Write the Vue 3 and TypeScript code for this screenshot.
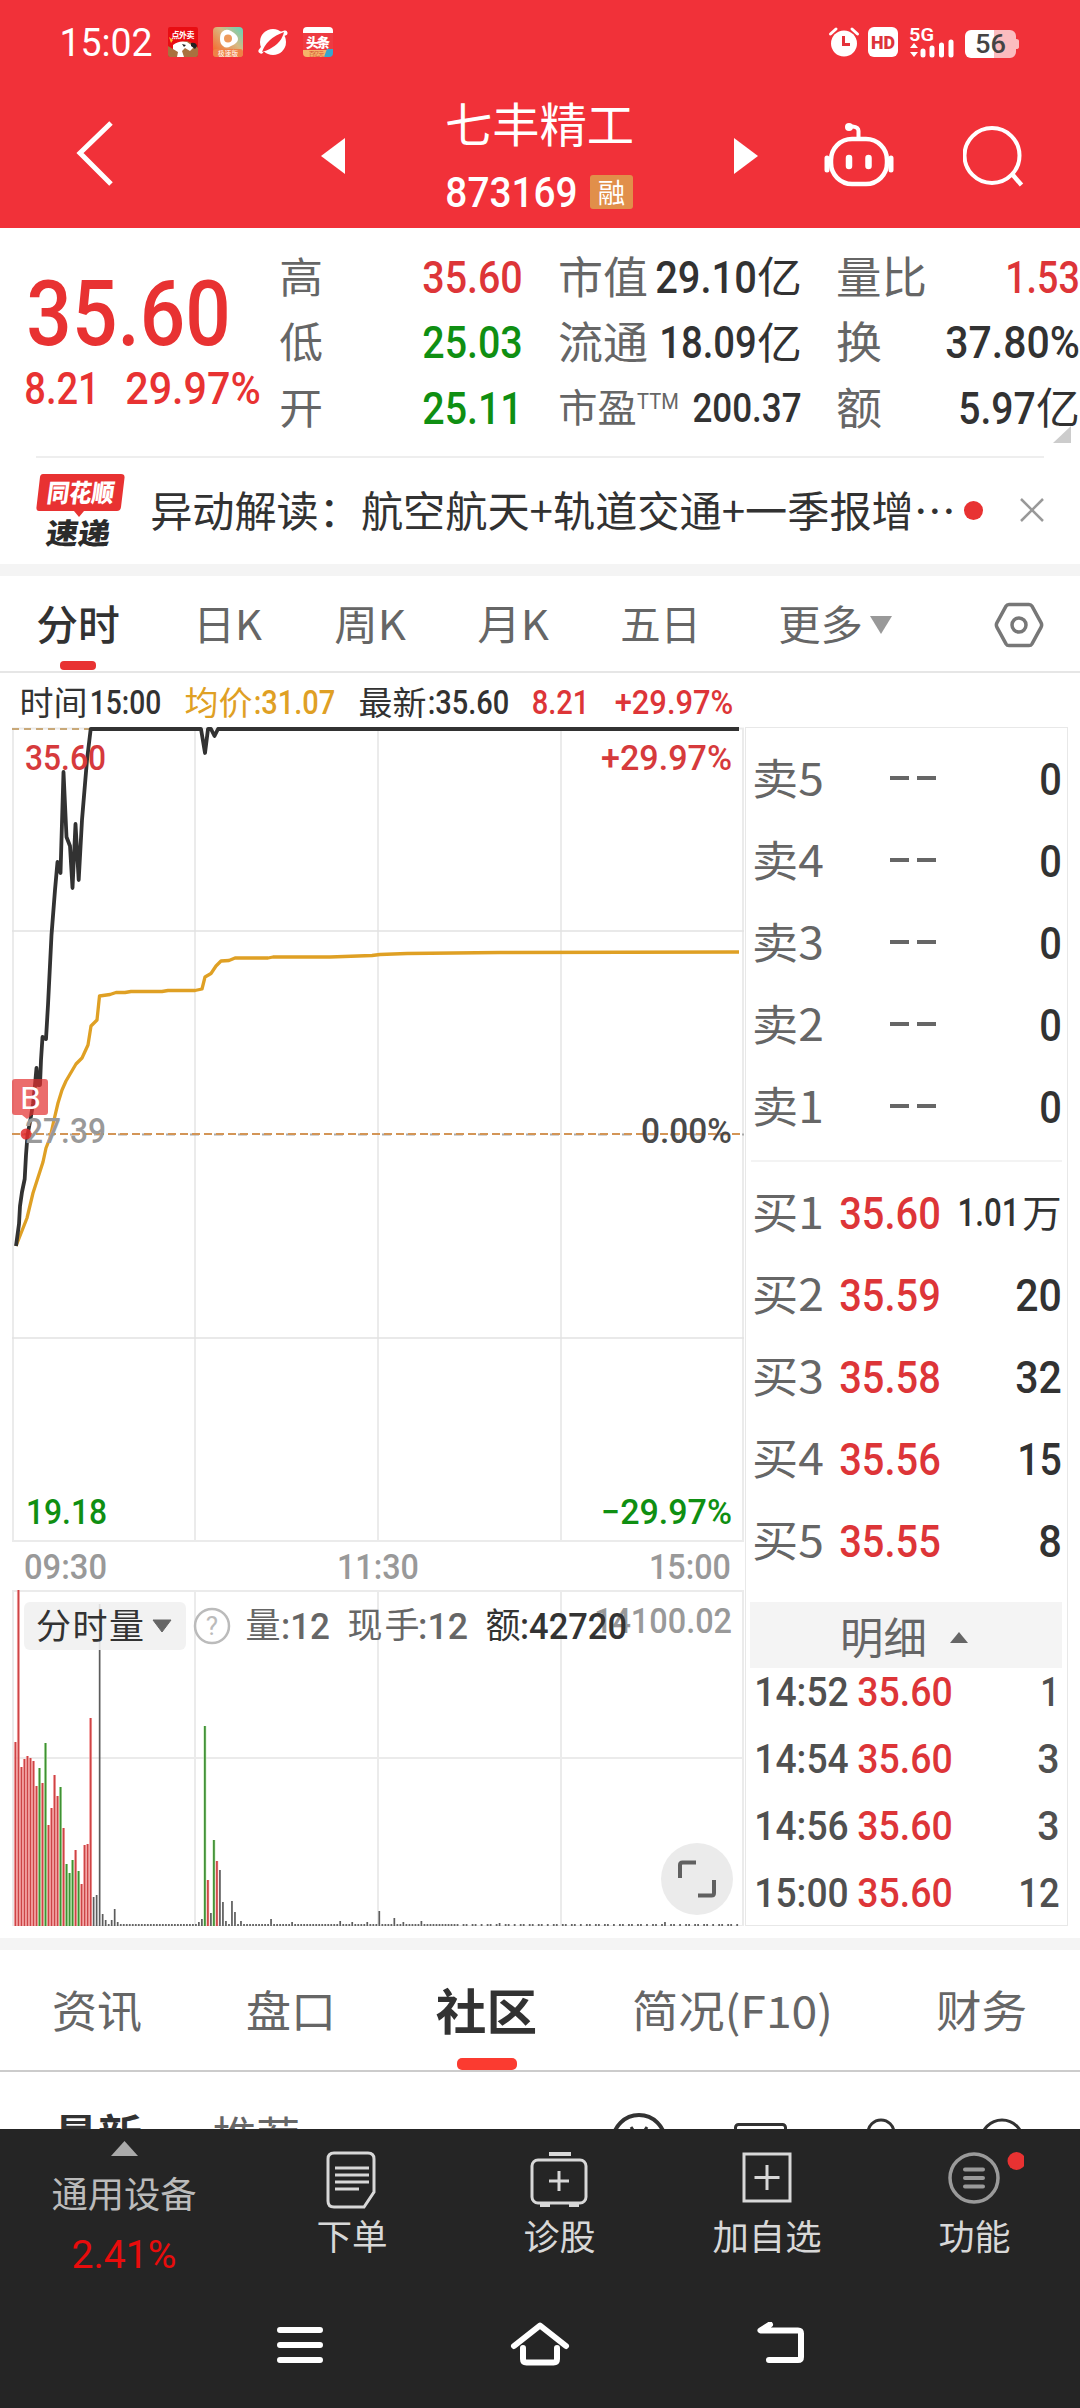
<script setup lang="ts">
import { h } from 'vue'

interface FitProps { s: string; w: number; f: number; cjk?: boolean; b?: number }

// A line of text fitted to a given width; its caps are centred in a box one em high.
const Fit = (p: FitProps) => {
  const pad = p.f * (p.cjk ? 0.045 : 0.04)
  return h('svg', { width: p.w, height: p.f, class: 'fit' }, [
    h('text', {
      x: -pad,
      y: p.f / 2 + p.f * (p.cjk ? 0.38 : 0.356),
      textLength: p.w + pad * 2,
      lengthAdjust: 'spacingAndGlyphs',
      'font-size': p.f,
      'font-weight': p.b ?? (p.cjk ? 400 : 500),
      'font-family': p.cjk ? "'Noto Sans CJK SC', sans-serif" : "Roboto, 'Noto Sans CJK SC', sans-serif",
      fill: 'currentColor',
    }, p.s),
  ])
}
Fit.props = { s: String, w: Number, f: Number, cjk: Boolean, b: Number }

const sells = ['卖5', '卖4', '卖3', '卖2', '卖1']
const buys = [
  { n: '买1', p: '35.60', v: '1.01', w: 59, unit: true },
  { n: '买2', p: '35.59', v: '20', w: 43 },
  { n: '买3', p: '35.58', v: '32', w: 43 },
  { n: '买4', p: '35.56', v: '15', w: 41 },
  { n: '买5', p: '35.55', v: '8', w: 20 },
]
const deals = [
  { t: '14:52', v: '1', w: 16 },
  { t: '14:54', v: '3', w: 19 },
  { t: '14:56', v: '3', w: 19 },
  { t: '15:00', v: '12', w: 38 },
]

const price = '16,1246 19,1224 20,1206 22,1192 24.7,1179 26,1155 27.5,1135 30,1122 33,1104 35,1085 36.5,1068 38,1085 40,1085 41,1060 42.5,1037 46,1039 48,1005 50,965 51.5,935 55,890 57.5,862 60.5,873 63.5,772 66.5,837 70,846 72.5,888 75.5,824 78.7,880 82,820 87,760 90.7,729 201,729 205,753 208,729 211,729 214.5,736 218,729 739,729'
const average = '16,1246 27,1218 33,1193 43,1162 46,1148 50,1138 54,1120 58,1103 62,1090 66,1081 76,1064 82,1058 88,1045 91,1026 97,1020 99.5,996 110,994.5 116,992.5 125,992.5 131,991.5 162,991.5 168,990.5 195,990.5 202,989 205,977 211,973.5 216,966 221,961 229,960.5 235,958 268,958 273,957 330,957 372,955.5 380,954.5 407,953.5 500,952.5 739,952'

// Volume per minute: slot number, height, direction (r up, g down, k flat).
const peaks: [number, number, string][] = [
  [0, 184, 'r'], [1, 336, 'r'], [2, 159, 'r'], [3, 167, 'r'], [4, 170, 'r'], [5, 168, 'r'], [6, 165, 'r'],
  [7, 140, 'r'], [8, 158, 'g'], [9, 143, 'r'], [10, 183, 'g'], [11, 101, 'r'], [12, 118, 'r'], [13, 151, 'r'],
  [14, 130, 'r'], [15, 139, 'g'], [16, 98, 'r'], [17, 62, 'g'], [18, 53, 'g'], [19, 66, 'g'], [20, 76, 'r'],
  [21, 55, 'g'], [22, 42, 'r'], [23, 81, 'r'], [24, 82, 'r'], [25, 208, 'r'], [26, 29, 'k'], [27, 31, 'k'],
  [28, 322, 'k'], [29, 12, 'k'], [30, 6, 'k'], [32, 6, 'k'], [33, 17, 'k'], [34, 4, 'k'], [61, 4, 'k'],
  [62, 7, 'k'], [63, 200, 'g'], [64, 46, 'r'], [65, 13, 'k'], [66, 86, 'g'], [67, 65, 'r'], [68, 56, 'k'],
  [69, 24, 'k'], [70, 5, 'k'], [72, 25, 'k'], [73, 14, 'k'], [75, 5, 'k'], [85, 7, 'k'], [92, 4, 'k'],
  [108, 5, 'k'], [112, 4, 'k'], [117, 4, 'k'], [121, 15, 'k'], [126, 8, 'k'], [129, 4, 'k'], [135, 5, 'k'],
  [161, 3, 'k'], [216, 4, 'k'],
]
const taken = new Set(peaks.map((b) => b[0]))
const quiet = Array.from({ length: 241 }, (_, i) => i)
  .filter((i) => i > 28 && !taken.has(i) && !(i > 145 && (i * 7) % 11 < 4))
const tint: Record<string, string> = { r: '#cc4446', g: '#3f8f35', k: '#5c5c5c' }
const halo: Record<string, string> = { r: '#ffb0b0', g: '#b5e8a4', k: 'none' }
const barX = (i: number) => 15.4 + i * 3.007
</script>

<template>
  <div class="page">
    <header class="head">
      <div class="status">
        <Fit s="15:02" :w="90" :f="39" :b="400" class="clock" />
        <svg class="app" width="30" height="30" viewBox="0 0 30 30">
          <rect width="30" height="30" rx="2" fill="#e90d12" />
          <path d="M0 19l5 3 4-6 10-2 7 3 4 4v7a2 2 0 0 1-2 2H2a2 2 0 0 1-2-2z" fill="#a9713f" />
          <path d="M5 18q6-5 14-3l7 5-4 4-5-3-3 3 2 6H9l1-5-5-3z" fill="#fff" />
          <path d="M23 16q5-1 6 3l-2 3-4-3zM14 17l4 1-2 2z" fill="#222" /><path d="M1 10l4 3-2 3z" fill="#ffbd2e" />
          <text x="3.5" y="10.5" font-size="8" font-weight="700" fill="#fff" textLength="23">点外卖</text>
        </svg>
        <svg class="app" width="30" height="30" viewBox="0 0 30 30">
          <defs><linearGradient id="video" x1="1" y1="0" x2="0.1" y2="0.9"><stop offset="0" stop-color="#5bd6bd" /><stop offset=".45" stop-color="#d8b982" /><stop offset="1" stop-color="#f6692c" /></linearGradient></defs>
          <rect width="30" height="30" rx="4" fill="url(#video)" />
          <path d="M9 5q4-4 9-1 7 4 7 8 0 4-7 7-5 3-8 0-3-2-3-7 0-5 2-7z" fill="#fff" /><circle cx="15" cy="11.500" r="4" fill="#ee9a5c" />
          <rect y="22" width="30" height="8" rx="3" fill="#ef8246" /><text x="5" y="28.500" font-size="6.500" fill="#fff" textLength="20">极速版</text>
        </svg>
        <svg class="app" width="30" height="30" viewBox="0 0 30 30">
          <circle cx="15" cy="15" r="13" fill="#fff" />
          <path d="M3 24Q13 9 27 6" fill="none" stroke="#fff" stroke-width="5" stroke-linecap="round" />
          <path d="M4 25Q9 11 26 5q-3 14-22 20z" fill="#f13139" />
        </svg>
        <svg class="app" width="30" height="30" viewBox="0 0 30 30">
          <rect width="30" height="30" rx="4" fill="#ee3b42" /><path d="M0 6V4a4 4 0 0 1 4-4h22a4 4 0 0 1 4 4v2z" fill="#fff" />
          <text x="3" y="19.500" font-size="13" font-weight="900" fill="#fff" textLength="24">头条</text>
          <path d="M0 23h25l-3 7H4a4 4 0 0 1-4-4z" fill="#f5b469" /><path d="M24 22h6v4a4 4 0 0 1-4 4h-5z" fill="#35a7cf" />
          <text x="6" y="29" font-size="5.500" fill="#d14a32" textLength="15">百亿元</text>
        </svg>
        <span class="grow"></span>
        <svg width="32" height="32" viewBox="0 0 32 32">
          <circle cx="16" cy="17.500" r="13" fill="#fff" /><path d="M2.500 8L8 3M29.500 8L24 3" stroke="#fff" stroke-width="3" stroke-linecap="round" />
          <path d="M15.500 10v8.500H22" fill="none" stroke="#e4323a" stroke-width="3" />
        </svg>
        <svg class="hd" width="30" height="30" viewBox="0 0 30 30">
          <rect width="30" height="30" rx="6" fill="#fff" />
          <text x="3" y="22" font-size="19" font-weight="900" fill="#dd333a" textLength="24" lengthAdjust="spacingAndGlyphs" font-family="Roboto">HD</text>
        </svg>
        <svg class="signal" width="46" height="32" viewBox="0 0 46 32">
          <text x="0" y="15" font-size="19" font-weight="600" fill="#fff" textLength="25" lengthAdjust="spacingAndGlyphs" font-family="Roboto">5G</text>
          <path d="M1 22l4-5 4 5zM1 26l4 5 4-5z" fill="#fff" />
          <path d="M14 25v4M23 22v7M32.500 19v10M42 16v13" stroke="#fff" stroke-width="5" stroke-linecap="round" />
        </svg>
        <svg class="battery" width="54" height="28" viewBox="0 0 54 28">
          <path d="M6 0h23v28H6a6 6 0 0 1-6-6V6a6 6 0 0 1 6-6z" fill="#fff" />
          <path d="M29 0h16a6 6 0 0 1 6 6v3q3 0 3 2v6q0 2-3 2v3a6 6 0 0 1-6 6H29z" fill="#fbbcbf" />
          <text x="10" y="23" font-size="26" font-weight="500" fill="#444" textLength="31" lengthAdjust="spacingAndGlyphs" font-family="Roboto">56</text>
        </svg>
      </div>
      <div class="titlebar">
        <svg class="back" width="40" height="68" viewBox="0 0 40 68"><path d="M35 3L4 33 35 64" fill="none" stroke="#fff" stroke-width="5" /></svg>
        <svg class="prev" width="24" height="36"><path d="M24 0v36L0 18z" fill="#fff" /></svg>
        <div class="name">
          <Fit s="七丰精工" :w="185" :f="47" cjk />
          <div class="code"><Fit s="873169" :w="129" :f="42" /><span class="tag"><Fit s="融" :w="25" :f="27" cjk /></span></div>
        </div>
        <svg class="next" width="24" height="36"><path d="M0 0v36l24-18z" fill="#fff" /></svg>
        <svg class="robot" width="70" height="64" viewBox="0 0 70 64">
          <path d="M34.500 16V8q0-4-6-4.500" fill="none" stroke="#fff" stroke-width="4" stroke-linecap="round" /><circle cx="25" cy="4" r="4" fill="#fff" />
          <rect x="7" y="16" width="56" height="45" rx="21" fill="none" stroke="#fff" stroke-width="4.500" />
          <path d="M3 35v12M67 35v12" stroke="#fff" stroke-width="5" stroke-linecap="round" />
          <path d="M25 35v8M44.500 35v8" stroke="#fff" stroke-width="6.500" stroke-linecap="round" />
        </svg>
        <svg class="search" width="62" height="62" viewBox="0 0 62 62"><circle cx="29" cy="29.500" r="27.500" fill="none" stroke="#fff" stroke-width="4" /><path d="M49 48l9.500 11" stroke="#fff" stroke-width="4.500" /></svg>
      </div>
    </header>

    <section class="quote">
      <div class="last red">
        <Fit s="35.60" :w="197" :f="91" class="big" />
        <div class="chg"><Fit s="8.21" :w="72" :f="44" /><Fit s="29.97%" :w="132" :f="44" /></div>
      </div>
      <div class="col c2">
        <div><Fit s="高" :w="40" :f="42" cjk /><Fit class="red" s="35.60" :w="97" :f="44" /></div>
        <div><Fit s="低" :w="40" :f="42" cjk /><Fit class="green" s="25.03" :w="97" :f="44" /></div>
        <div><Fit s="开" :w="40" :f="42" cjk /><Fit class="green" s="25.11" :w="97" :f="44" /></div>
      </div>
      <div class="col c3">
        <div><Fit s="市值" :w="86" :f="44" cjk /><span class="val"><Fit s="29.10" :w="98" :f="44" /><Fit s="亿" :w="41" :f="43" cjk /></span></div>
        <div><Fit s="流通" :w="86" :f="44" cjk /><span class="val"><Fit s="18.09" :w="94" :f="44" /><Fit s="亿" :w="41" :f="43" cjk /></span></div>
        <div><span class="pe"><Fit s="市盈" :w="75" :f="39" cjk /><Fit s="TTM" :w="40" :f="22" :b="400" /></span><Fit class="dark" s="200.37" :w="106" :f="40" /></div>
      </div>
      <div class="col c4">
        <div><Fit s="量比" :w="87" :f="44" cjk /><Fit class="red" s="1.53" :w="71" :f="44" /></div>
        <div><Fit s="换" :w="42" :f="44" cjk /><Fit class="dark" s="37.80%" :w="131" :f="44" /></div>
        <div><Fit s="额" :w="42" :f="44" cjk /><span class="val"><Fit s="5.97" :w="74" :f="44" /><Fit s="亿" :w="40" :f="43" cjk /></span></div>
        <svg class="corner" width="18" height="17"><path d="M18 0v17H0z" fill="#ccc" /></svg>
      </div>
    </section>

    <section class="news">
      <svg class="brand" width="90" height="74" viewBox="0 0 90 74">
        <path d="M7 0h78q4 0 3.500 4L85 33q-.5 4-4 4H48l-5 6-5-6H3q-3 0-2.500-4L4 3q.5-3 3-3z" fill="#e83232" />
        <g font-weight="900"><text transform="translate(10 28) skewX(-8)" font-size="25" fill="#fff" textLength="67" lengthAdjust="spacingAndGlyphs">同花顺</text>
        <text transform="translate(9 70) skewX(-8)" font-size="29" fill="#2b2b2b" textLength="64" lengthAdjust="spacingAndGlyphs">速递</text></g>
      </svg>
      <Fit class="headline dark" s="异动解读：航空航天+轨道交通+一季报增…" :w="802" :f="42" cjk />
      <span class="dot"></span>
      <svg class="close" width="24" height="24"><path d="M1 1l22 22M23 1L1 23" stroke="#999" stroke-width="2.500" /></svg>
    </section>

    <nav class="periods">
      <span class="on"><Fit s="分时" :w="80" :f="41" cjk :b="500" /></span>
      <Fit s="日K" :w="65" :f="41" cjk style="margin-left: 77px" />
      <Fit s="周K" :w="68" :f="41" cjk style="margin-left: 76px" />
      <Fit s="月K" :w="68" :f="41" cjk style="margin-left: 75px" />
      <Fit s="五日" :w="77" :f="41" cjk style="margin-left: 75px" />
      <Fit s="更多" :w="81" :f="41" cjk style="margin-left: 81px" />
      <svg class="caret" width="22" height="18"><path d="M0 0h22L11 18z" fill="#999" /></svg>
      <svg class="gear" width="50" height="46" viewBox="0 0 50 46"><path d="M15 2.500h20q2 0 3 1.700l9 16.500q1.300 2.300 0 4.600l-9 16.500q-1 1.700-3 1.700H15q-2 0-3-1.700L3 25.300q-1.300-2.300 0-4.600l9-16.500q1-1.700 3-1.700z" fill="none" stroke="#777" stroke-width="3.500" /><circle cx="25" cy="23" r="7" fill="none" stroke="#777" stroke-width="3.500" /></svg>
    </nav>

    <section class="market">
      <div class="left">
        <div class="readout dark">
          <Fit s="时间" :w="65" :f="33" cjk /><Fit s="15:00" :w="69" :f="33" style="margin-left: 5px" />
          <span class="gold"><Fit s="均价" :w="65" :f="33" cjk /><Fit s=":31.07" :w="79" :f="33" /></span>
          <span class="latest"><Fit s="最新" :w="65" :f="33" cjk /><Fit s=":35.60" :w="79" :f="33" /></span>
          <Fit class="red" s="8.21" :w="55" :f="33" style="margin-left: 25px" />
          <Fit class="red" s="+29.97%" :w="116" :f="33" style="margin-left: 28px" />
        </div>
        <svg class="chart" width="745" height="1199" viewBox="0 727 745 1199">
          <g stroke="#ebebeb" stroke-width="2" fill="none">
            <path d="M12 728.500H744M12 1541H744M12 1591H744M12 1758H744M12 1926H744" />
            <path d="M13 728V1541M195 728V1541M378 728V1541M561 728V1541M743 728V1541" />
            <path d="M13 1591V1926M195 1591V1926M378 1591V1926M561 1591V1926M743 1591V1926" />
            <path d="M12 931H744M12 1338H744" stroke="#e2e2e2" stroke-width="1.300" />
          </g>
          <path d="M12 729H92" stroke="#c8a878" stroke-width="2" stroke-dasharray="7 5" />
          <path d="M12 1134.500H744" stroke="#aaa" stroke-width="2" stroke-dasharray="9 15" stroke-dashoffset="-10" />
          <path d="M12 1134H744" stroke="#d39556" stroke-width="2" stroke-dasharray="8 4" />
          <polyline :points="average" fill="none" stroke="#dfa024" stroke-width="3.300" stroke-linejoin="round" />
          <polyline :points="price" fill="none" stroke="#323232" stroke-width="3.800" stroke-linejoin="round" />
          <g class="num" font-size="35">
            <text x="25" y="770" fill="#d63a3c" textLength="81" lengthAdjust="spacingAndGlyphs">35.60</text>
            <text x="601" y="770" fill="#d63a3c" textLength="131" lengthAdjust="spacingAndGlyphs">+29.97%</text>
            <text x="25" y="1143" fill="#999" textLength="81" lengthAdjust="spacingAndGlyphs">27.39</text>
            <text x="641" y="1143" fill="#4a4a4a" textLength="91" lengthAdjust="spacingAndGlyphs">0.00%</text>
            <text x="26" y="1524" fill="#0f8f12" textLength="81" lengthAdjust="spacingAndGlyphs">19.18</text>
            <text x="601" y="1524" fill="#0f8f12" textLength="131" lengthAdjust="spacingAndGlyphs">−29.97%</text>
            <g fill="#999">
              <text x="24" y="1579" textLength="83" lengthAdjust="spacingAndGlyphs">09:30</text>
              <text x="337" y="1579" textLength="82" lengthAdjust="spacingAndGlyphs">11:30</text>
              <text x="649" y="1579" textLength="82" lengthAdjust="spacingAndGlyphs">15:00</text>
              <text x="594" y="1633" textLength="138" lengthAdjust="spacingAndGlyphs">14100.02</text>
            </g>
          </g>
          <g fill="#e32d2d">
            <path d="M15 1079h30q3 0 3 3v30q0 3-3 3H32l-5 4-5-4h-7q-3 0-3-3v-30q0-3 3-3z" opacity=".7" />
            <circle cx="26" cy="1134" r="5.500" opacity=".85" />
          </g>
          <text x="20" y="1109" font-size="31" fill="#fff" font-family="Roboto" textLength="21" lengthAdjust="spacingAndGlyphs">B</text>

          <rect v-for="b in peaks" :key="'h' + b[0]" :x="barX(b[0]) - 1.5" :y="1926 - b[1]" width="3" :height="b[1]" :fill="halo[b[2]]" opacity=".75" />
          <rect v-for="b in peaks" :key="b[0]" :x="barX(b[0]) - 0.8" :y="1926 - b[1]" width="1.7" :height="b[1]" :fill="tint[b[2]]" />
          <rect v-for="i in quiet" :key="'q' + i" :x="barX(i) - 0.8" y="1924" width="1.8" height="2" fill="#666" />

          <rect x="24" y="1602" width="162" height="48" rx="6" fill="#f0f0f0" opacity=".88" />
          <g class="cjk" font-size="35">
            <text x="36" y="1639" fill="#333" textLength="108">分时量</text>
            <text x="245.500" y="1638" fill="#666" textLength="35">量</text>
            <text x="347.500" y="1638" fill="#666" textLength="72">现手</text>
            <text x="485.500" y="1638" fill="#333" textLength="35">额</text>
          </g>
          <path d="M153 1620h18l-9 12z" fill="#666" stroke="#666" stroke-linejoin="round" />
          <circle cx="212" cy="1626" r="17" fill="none" stroke="#bbb" stroke-width="2.500" />
          <text x="212" y="1635" font-size="26" fill="#bbb" text-anchor="middle" font-family="Roboto">?</text>
          <g class="num" font-size="36" fill="#666">
            <text x="281" y="1639" textLength="49" lengthAdjust="spacingAndGlyphs">:12</text>
            <text x="418" y="1639" textLength="50" lengthAdjust="spacingAndGlyphs">:12</text>
            <text x="520" y="1639" fill="#333" textLength="107" lengthAdjust="spacingAndGlyphs">:42720</text>
          </g>
          <circle cx="697" cy="1879" r="36" fill="#ebebeb" />
          <path d="M680 1878v-13q0-2.500 2.500-2.500H696M714 1880v13q0 2.500-2.500 2.500H698" fill="none" stroke="#606060" stroke-width="4" />
        </svg>
      </div>

      <div class="book">
        <div v-for="s in sells" :key="s" class="row"><Fit :s="s" :w="68" :f="43" cjk /><span class="none"><i></i><i></i></span><Fit class="dark" s="0" :w="19" :f="45" /></div>
        <hr />
        <div v-for="b in buys" :key="b.n" class="row">
          <Fit :s="b.n" :w="68" :f="43" cjk /><Fit class="price" :s="b.p" :w="98" :f="45" />
          <span class="val"><Fit :s="b.v" :w="b.w" :f="b.unit ? 39 : 45" /><Fit v-if="b.unit" s="万" :w="36" :f="38" cjk /></span>
        </div>
        <div class="detail"><Fit s="明细" :w="83" :f="43" cjk /><svg width="18" height="11"><path d="M9 0l9 11H0z" fill="#666" /></svg></div>
        <div class="deals">
          <div v-for="d in deals" :key="d.t" class="deal"><Fit :s="d.t" :w="91" :f="41" /><Fit class="price" s="35.60" :w="92" :f="41" /><Fit class="qty" :s="d.v" :w="d.w" :f="41" /></div>
        </div>
      </div>
    </section>

    <nav class="tabs">
      <Fit s="资讯" :w="86" :f="44" cjk />
      <Fit s="盘口" :w="86" :f="44" cjk style="margin-left: 108px" />
      <span class="on"><Fit s="社区" :w="97" :f="49" cjk :b="700" /></span>
      <Fit s="简况(F10)" :w="197" :f="44" cjk style="margin-left: 99px" />
      <Fit s="财务" :w="87" :f="44" cjk style="margin-left: 107px" />
    </nav>

    <section class="feed">
      <Fit class="dark" s="最新" :w="84" :f="43" cjk :b="700" />
      <Fit s="推荐" :w="83" :f="43" cjk style="margin: 2px 0 0 75px" />
      <span class="grow"></span>
      <svg width="420" height="60" viewBox="0 0 420 60" fill="none" stroke="#333" stroke-width="3">
        <circle cx="29" cy="28" r="26" stroke-width="4" /><path d="M21 14l8 12 8-12M20 28h18" />
        <rect x="125.500" y="11.500" width="50" height="40" rx="3" /><circle cx="271" cy="20" r="13" /><circle cx="392" cy="28" r="21" />
      </svg>
    </section>

    <footer class="dock">
      <div class="actions">
        <div class="sector">
          <svg width="27" height="15"><path d="M13.500 0L27 15H0z" fill="#aaa" /></svg>
          <Fit s="通用设备" :w="142" :f="36" cjk />
          <Fit class="up" s="2.41%" :w="102" :f="38" :b="400" />
        </div>
        <div class="act">
          <svg width="56" height="60" viewBox="0 0 56 60"><path d="M10 3h34q6 0 6 6v33L40 57H10q-6 0-6-6V9q0-6 6-6z" /><path d="M11 18h34M11 25h34M11 32h34M11 39h24" /></svg>
          <Fit s="下单" :w="68" :f="35" cjk />
        </div>
        <div class="act">
          <svg width="60" height="60" viewBox="0 0 60 60"><path d="M20 4h22" stroke-width="4" /><rect x="3" y="10" width="54" height="43" rx="6" /><path d="M30 21v20M20 31h20" /><path d="M11 55h10M40 55h10" stroke-width="4" /></svg>
          <Fit s="诊股" :w="69" :f="35" cjk />
        </div>
        <div class="act">
          <svg width="60" height="60" viewBox="0 0 60 60"><rect x="7" y="4" width="46" height="47" /><path d="M30 15v25M17.500 27.500h25" /></svg>
          <Fit s="加自选" :w="106" :f="35" cjk />
        </div>
        <div class="act">
          <svg width="100" height="60" viewBox="0 0 100 60"><circle cx="50" cy="28" r="24" stroke="#9a9a9a" stroke-width="3.500" /><path d="M41 19.500h18M41 28h18M41 36.500h18" stroke="#9a9a9a" stroke-width="4" stroke-linecap="round" /><circle cx="92.500" cy="11" r="9" fill="#e83232" stroke="none" /></svg>
          <Fit s="功能" :w="69" :f="35" cjk />
        </div>
      </div>
      <div class="system">
        <svg width="46" height="46" viewBox="0 0 46 46"><path d="M3 8h40M3 23h40M3 38h40" /></svg>
        <svg width="60" height="46" viewBox="0 0 60 46"><path d="M4 24L30 3.500 56 24" /><path d="M13 26v11q0 3.500 3.500 3.500h27q3.500 0 3.500-3.500V26" /></svg>
        <svg width="52" height="46" viewBox="0 0 52 46"><path d="M15 2.500L5.500 8.500H43q3 0 3 3v23.500q0 3-3 3H14" /></svg>
      </div>
    </footer>
  </div>
</template>

<style>
body { margin: 0; }
.fit { display: block; flex: none; overflow: visible; }
</style>

<style scoped>
.page { width: 1080px; height: 2408px; overflow: hidden; background: #fff; color: #666; font-family: 'Noto Sans CJK SC', sans-serif; display: flex; flex-direction: column; }
.page > * { flex: none; box-sizing: border-box; }
svg { flex: none; display: block; }
.grow { flex: 1; }
.red, .price { color: #dd3538; }
.green { color: #0f8f12; }
.dark, .val { color: #323232; }
.num { font-family: Roboto, sans-serif; font-weight: 500; }
.cjk { font-family: 'Noto Sans CJK SC', sans-serif; }

.head { height: 228px; background: #f13139; color: #fff; }
.status { height: 84px; display: flex; align-items: center; padding: 0 61px; }
.clock { margin-right: 2px; }
.app { margin-left: 15px; }
.hd { margin-left: 8px; }
.signal { margin-left: 11px; }
.battery { margin: 3px 0 0 10px; }
.titlebar { height: 144px; display: flex; align-items: flex-start; }
.back { margin: 36px 0 0 76px; }
.prev { margin: 54px 0 0 205px; }
.name { margin: 17px 0 0 102px; width: 186px; }
.code { display: flex; align-items: center; justify-content: space-between; margin-top: 23px; }
.tag { width: 43px; height: 34px; border-radius: 3px; background: #e18f4a; display: flex; align-items: center; justify-content: center; }
.next { margin: 54px 0 0 101px; }
.robot { margin: 39px 0 0 66px; }
.search { margin: 42px 0 0 69px; }

.quote { height: 228px; display: flex; }
.last { width: 255px; padding: 39px 0 0 26px; }
.last.red { color: #e83232; }
.big { margin-left: 4px; }
.chg { display: flex; justify-content: space-between; width: 233px; margin-top: 8px; }
.col { padding-top: 16px; }
.col > div { height: 65.500px; display: flex; align-items: center; justify-content: space-between; }
.c2 { width: 240px; }
.c3 { width: 240px; margin-left: 39px; }
.c4 { width: 239.500px; margin-left: 38px; }
.val { display: flex; align-items: center; gap: 4px; }
.pe { display: flex; align-items: center; gap: 3px; }
.pe .fit + .fit { margin-bottom: 14px; }
.corner { margin: -15px 0 0 215px; position: relative; }

.news { height: 120px; border-bottom: 12px solid #f4f4f4; display: flex; align-items: center; padding: 0 36px; background: linear-gradient(#eee, #eee) 36px 0 / 1008px 2px no-repeat; }
.brand { margin-top: 2px; }
.headline { margin: 1px 0 0 26px; }
.dot { width: 19px; height: 19px; border-radius: 50%; background: #e83232; margin-left: 10px; }
.close { margin-left: auto; }

.periods { height: 97px; border-bottom: 2px solid #e6e6e6; display: flex; align-items: center; padding: 2px 36px 0 38px; }
.on { position: relative; color: #323232; }
.periods .on::after { content: ''; position: absolute; left: 22px; top: 57px; width: 36px; height: 9px; border-radius: 4px; background: #e83232; }
.caret { margin-left: 9px; }
.gear { margin-left: auto; }

.market { height: 1265px; display: flex; }
.left { width: 745px; }
.readout { height: 54px; box-sizing: border-box; padding: 5px 0 0 21px; display: flex; align-items: center; }
.readout span { display: flex; align-items: center; gap: 4px; }
.gold { color: #dfa024; margin-left: 26px; }
.latest { margin-left: 26px; }
.book { width: 323px; height: 1199px; margin-top: 54px; box-sizing: border-box; border: 1px solid #e8e8e8; padding-top: 9px; }
.row { height: 82px; display: grid; grid-template-columns: 87px 140px 79px; align-items: center; padding-left: 8px; }
.row > :last-child { justify-self: end; }
.none { display: flex; gap: 8px; margin-left: 49px; }
.none i { width: 19px; height: 3.500px; background: #666; }
.row .val { gap: 6px; }
.book hr { margin: 13px 5px 10px; border: 0; height: 1.500px; background: #f3f3f3; }
.detail { height: 66px; margin: 20px 5px 0 4px; background: #f4f4f4; display: flex; align-items: center; padding: 5px 0 0 92px; box-sizing: border-box; gap: 25px; }
.deals { margin-top: -10px; }
.deal { height: 67px; display: flex; align-items: center; gap: 12px; padding: 0 9px 0 10px; color: #505050; }
.qty { margin-left: auto; }

.tabs { height: 134px; border-top: 12px solid #f4f4f4; border-bottom: 2px solid #ccc; display: flex; align-items: center; padding: 2px 0 0 54px; }
.tabs .on { margin-left: 104px; }
.tabs .on::after { content: ''; position: absolute; left: 19px; top: 71px; width: 60px; height: 12px; border-radius: 5px; background: #fb3b30; }
.feed { height: 57px; overflow: hidden; display: flex; align-items: flex-start; padding: 41px 50px 0 56px; }

.dock { height: 279px; background: #252525; }
.actions { height: 160px; display: flex; padding-left: 20px; }
.sector { width: 208px; display: flex; flex-direction: column; align-items: center; color: #bbb; padding-top: 12px; box-sizing: border-box; }
.sector .fit { margin-top: 20px; }
.sector .up { color: #e80c0c; margin-top: 23px; }
.act { width: 207.500px; display: flex; flex-direction: column; align-items: center; padding-top: 21px; color: #d8d8d8; }
.act svg:first-child { fill: none; stroke: #d8d8d8; stroke-width: 3; margin-bottom: 9px; }
.sector + .act { margin-left: 20px; }
.system { display: flex; padding: 33px 0 0 277px; }
.system svg { fill: none; stroke: #fff; stroke-width: 6; stroke-linecap: round; stroke-linejoin: round; }
.system svg + svg { margin-left: 187px; }
.system svg + svg + svg { margin-left: 185px; }
</style>
